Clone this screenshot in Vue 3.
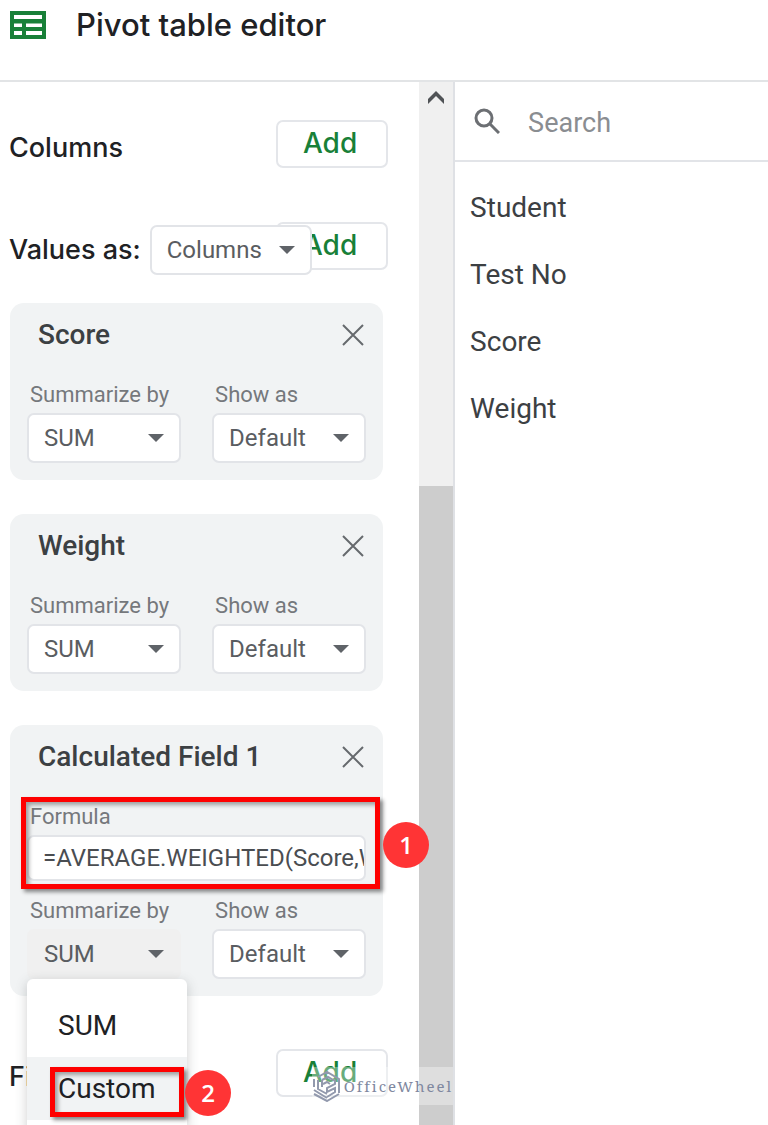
<template>
  <div class="editor">
    <header class="editor-header">
      <svg class="logo" viewBox="0 0 36 28" aria-hidden="true">
        <path fill="#188038" fill-rule="evenodd" d="M0 0h36v28H0z M4 4v4h28V4z M4 12.500v3.500h8v-3.500z M16 12.500v3.500h16v-3.500z M4 20v4h8v-4z M16 20v4h16v-4z" />
      </svg>
      <h1>Pivot table editor</h1>
    </header>

    <main class="editor-body">
      <section class="pane">
        <div class="pane-content">
          <div class="group-row">
            <div class="group-title"><h2>Columns</h2></div>
            <button class="add-button" type="button">Add</button>
          </div>

          <div class="group-row values-row">
            <div class="group-title">
              <h2><label for="values-as">Values as:</label></h2>
              <div class="dropdown values-dropdown">
                <select id="values-as" v-model="valuesAs">
                  <option>Columns</option>
                  <option>Rows</option>
                </select>
                <svg class="caret" viewBox="0 0 16 8" aria-hidden="true"><path d="M0 0h16L8 8z" /></svg>
              </div>
            </div>
            <button class="add-button" type="button">Add</button>
          </div>

          <div class="cards">
            <article v-for="field in fields" :key="field.id" class="card">
              <div class="card-header">
                <h3>{{ field.name }}</h3>
                <button class="close-button" type="button" :aria-label="'Remove ' + field.name">
                  <svg viewBox="0 0 22 22" aria-hidden="true"><path d="M1 1l20 20M21 1L1 21" /></svg>
                </button>
              </div>

              <div v-if="field.calculated" class="formula">
                <label class="caption" for="formula">Formula</label>
                <input id="formula" v-model="field.formula" type="text" />
                <div class="marker formula-marker"></div>
                <span class="badge formula-badge">1</span>
              </div>

              <div class="card-options">
                <div class="option">
                  <label class="caption" :for="field.id + '-summarize'">Summarize by</label>
                  <div class="dropdown" :class="{ 'is-open': field.calculated }">
                    <select :id="field.id + '-summarize'" v-model="field.summarize">
                      <option>SUM</option>
                      <option>Custom</option>
                    </select>
                    <svg class="caret" viewBox="0 0 16 8" aria-hidden="true"><path d="M0 0h16L8 8z" /></svg>
                    <div v-if="field.calculated" class="menu">
                      <button class="menu-item" type="button" @click="field.summarize = 'SUM'">SUM</button>
                      <button class="menu-item is-active" type="button" @click="field.summarize = 'Custom'">
                        Custom
                      </button>
                      <div class="marker menu-marker"></div>
                      <span class="badge menu-badge">2</span>
                    </div>
                  </div>
                </div>
                <div class="option">
                  <label class="caption" :for="field.id + '-show'">Show as</label>
                  <div class="dropdown">
                    <select :id="field.id + '-show'" v-model="field.show">
                      <option>Default</option>
                    </select>
                    <svg class="caret" viewBox="0 0 16 8" aria-hidden="true"><path d="M0 0h16L8 8z" /></svg>
                  </div>
                </div>
              </div>
            </article>
          </div>

          <div class="group-row filters-row">
            <div class="group-title"><h2>Filters</h2></div>
            <button class="add-button" type="button">Add</button>
          </div>
        </div>

        <div class="scrollbar">
          <button class="scroll-up" type="button" aria-label="Scroll up">
            <svg viewBox="0 0 18 13" aria-hidden="true"><path d="M1 8L9 0l8 8v5L9 5l-8 8z" /></svg>
          </button>
          <div class="scroll-space"></div>
          <div class="scroll-thumb"></div>
        </div>

        <div class="watermark">
          <svg viewBox="0 0 30 32" aria-hidden="true">
            <path d="M6 7l9-5 12 7v14M2 9v8M6 10v9l9 5M2 20l13 8M2 24l13 7 12-7M10 10v7M10 10l6-3 7 4v3l-8 4v4l8-4v4l-8 5M11 14l4-2 3 2" />
          </svg>
          <span>OfficeWheel</span>
        </div>
      </section>

      <aside class="sidebar">
        <div class="search">
          <svg viewBox="0 0 26 26" aria-hidden="true">
            <circle cx="10" cy="10" r="8" />
            <path d="M16 16l9 9" />
          </svg>
          <input v-model="query" type="text" placeholder="Search" aria-label="Search" />
        </div>
        <ul class="columns">
          <li v-for="column in visibleColumns" :key="column">{{ column }}</li>
        </ul>
      </aside>
    </main>
  </div>
</template>

<script setup>
import { computed, ref } from 'vue';

const valuesAs = ref('Columns');
const query = ref('');

const fields = ref([
  { id: 'score', name: 'Score', summarize: 'SUM', show: 'Default' },
  { id: 'weight', name: 'Weight', summarize: 'SUM', show: 'Default' },
  {
    id: 'calculated',
    name: 'Calculated Field 1',
    calculated: true,
    formula: '=AVERAGE.WEIGHTED(Score,Weight)',
    summarize: 'SUM',
    show: 'Default'
  }
]);

const columns = ['Student', 'Test No', 'Score', 'Weight'];

const visibleColumns = computed(() =>
  columns.filter((column) => column.toLowerCase().includes(query.value.toLowerCase()))
);
</script>

<style>
body {
  margin: 0;
  background: #fff;
}
</style>

<style scoped>
.editor {
  display: flex;
  flex-direction: column;
  height: 100vh;
  overflow: hidden;
  font-family: Roboto, "Liberation Sans", sans-serif;
  color: #202124;
}

.editor *,
.editor {
  box-sizing: border-box;
}

button,
input,
select {
  font-family: inherit;
  margin: 0;
}

h1,
h2,
h3,
ul {
  margin: 0;
  padding: 0;
}

h1,
h2,
.add-button {
  font-family: Inter, Roboto, sans-serif;
  font-weight: 500;
}

.editor-header {
  flex: none;
  display: flex;
  align-items: flex-start;
  gap: 30px;
  height: 82px;
  padding: 5px 10px 0;
  border-bottom: 2px solid #e2e4e6;
}

.logo {
  width: 36px;
  height: 28px;
  margin-top: 6px;
}

h1 {
  font-size: 31px;
  line-height: 40px;
}

.editor-body {
  flex: 1;
  min-height: 0;
  display: flex;
}

/* Left pane */
.pane {
  position: relative;
  width: 59%;
  display: flex;
  overflow: hidden;
}

.pane-content {
  position: relative;
  z-index: 1;
  flex: 1;
  min-width: 0;
  padding: 38px 31px 0 9px;
}

.group-row {
  display: flex;
  height: 48px;
}

.values-row {
  margin-top: 54px;
}

.filters-row {
  margin-top: 53px;
}

.group-title {
  position: relative;
  z-index: 1;
  flex: 1;
  min-width: 0;
  display: flex;
  align-items: center;
  gap: 9px;
  padding-top: 8px;
}

h2 {
  flex: none;
  font-size: 27px;
  line-height: 32px;
}

.add-button {
  flex: none;
  width: 112px;
  padding: 0 4px 2px 0;
  border: 2px solid #e4e6ea;
  border-radius: 7px;
  background: #fff;
  color: #188038;
  font-size: 28px;
}

.dropdown {
  position: relative;
}

.values-dropdown {
  flex: none;
  width: 162px;
}

select {
  display: block;
  width: 100%;
  height: 50px;
  padding: 0 40px 0 15px;
  appearance: none;
  border: 2px solid #e2e4e8;
  border-radius: 7px;
  background: #fff;
  color: #5a5d61;
  font-size: 24px;
}

.caret {
  position: absolute;
  top: 21px;
  right: 17px;
  width: 16px;
  height: 8px;
  fill: #5f6368;
  pointer-events: none;
}

/* Value cards */
.cards {
  display: flex;
  flex-direction: column;
  gap: 34px;
  margin: 33px 5px 0 1px;
}

.card {
  padding: 16px 17px 17px;
  border-radius: 14px;
  background: #f1f3f4;
}

.card-header {
  display: flex;
  align-items: center;
  justify-content: space-between;
  height: 32px;
  margin-bottom: 32px;
  padding-left: 11px;
}

h3 {
  font-size: 28px;
  font-weight: 500;
  line-height: 32px;
  color: #3c4043;
}

.close-button {
  padding: 2px;
  border: 0;
  background: none;
}

.close-button svg {
  display: block;
  width: 22px;
  height: 22px;
  fill: none;
  stroke: #66696d;
  stroke-width: 2;
}

.caption {
  display: block;
  margin-bottom: 6px;
  padding-left: 3px;
  font-size: 22px;
  line-height: 24px;
  color: #75787c;
}

.card-options {
  display: flex;
  gap: 31px;
}

.option {
  flex: 1;
  min-width: 0;
}

.is-open select {
  border-color: #f0f0f0;
  background: #f0f0f0;
}

.formula {
  position: relative;
  margin-bottom: 18px;
}

.formula input {
  display: block;
  width: 100%;
  height: 46px;
  padding: 0 0 0 14px;
  border: 2px solid #e2e4e8;
  border-radius: 7px;
  background: #fff;
  color: #4a4d51;
  font-size: 24px;
}

/* Step markers */
.marker {
  position: absolute;
  border: 5px solid #fe0000;
  box-shadow: 3px 3px 4px rgba(0, 0, 0, 0.45), inset 3px 3px 4px rgba(0, 0, 0, 0.35);
  pointer-events: none;
}

.badge {
  position: absolute;
  width: 46px;
  height: 46px;
  border-radius: 50%;
  background: #ff3435;
  color: #fff;
  font-family: "Open Sans", sans-serif;
  font-size: 24px;
  font-weight: 600;
  line-height: 46px;
  text-align: center;
}

.formula-marker {
  inset: -8px -14px -8px -6px;
}

.formula-badge {
  top: 17px;
  right: -63px;
}

.menu {
  position: absolute;
  z-index: 2;
  top: 100%;
  left: 0;
  width: 160px;
  padding: 15px 0;
  border-radius: 6px;
  background: #fff;
  box-shadow: 0 3px 12px rgba(60, 64, 67, 0.25);
}

.menu-item {
  display: block;
  width: 100%;
  height: 63px;
  padding: 0 0 0 31px;
  border: 0;
  background: none;
  color: #202124;
  font-size: 28px;
  text-align: left;
}

.menu-item.is-active {
  background: #f1f3f4;
}

.menu-marker {
  top: 88px;
  left: 23px;
  width: 134px;
  height: 50px;
}

.menu-badge {
  top: 91px;
  left: 158px;
}

/* Scrollbar */
.scrollbar {
  flex: none;
  width: 34px;
  display: flex;
  flex-direction: column;
  background: #f0f0f0;
}

.scroll-up {
  height: 34px;
  padding: 0;
  border: 0;
  background: none;
}

.scroll-up svg {
  width: 18px;
  height: 13px;
  fill: #505356;
}

.scroll-space {
  flex: 37;
}

.scroll-thumb {
  flex: 64;
  background: #cdcdcd;
}

.watermark {
  position: absolute;
  z-index: 2;
  right: 0;
  bottom: 20px;
  display: flex;
  align-items: center;
  gap: 2px;
  height: 38px;
  background: rgba(255, 255, 255, 0.35);
  color: #8088a0;
  font-family: "Noto Serif", "Liberation Serif", serif;
  font-size: 15px;
  letter-spacing: 2px;
  white-space: nowrap;
  pointer-events: none;
}

.watermark svg {
  width: 30px;
  height: 32px;
  fill: none;
  stroke: #9299ad;
  stroke-width: 2;
}

/* Column list */
.sidebar {
  flex: 1;
  min-width: 0;
  border-left: 2px solid #dfe1e5;
}

.search {
  display: flex;
  align-items: center;
  gap: 28px;
  height: 80px;
  padding: 0 16px 0 19px;
  border-bottom: 2px solid #e2e4e8;
}

.search svg {
  flex: none;
  width: 26px;
  height: 26px;
  fill: none;
  stroke: #6c6f73;
  stroke-width: 3;
}

.search input {
  flex: 1;
  min-width: 0;
  padding: 3px 0 0;
  border: 0;
  outline: 0;
  background: none;
  color: #3c4043;
  font-size: 27px;
}

.search input::placeholder {
  color: #8a8d91;
}

.columns {
  padding: 12px 15px;
  list-style: none;
  font-size: 28px;
  line-height: 67px;
  color: #3c4043;
}
</style>
